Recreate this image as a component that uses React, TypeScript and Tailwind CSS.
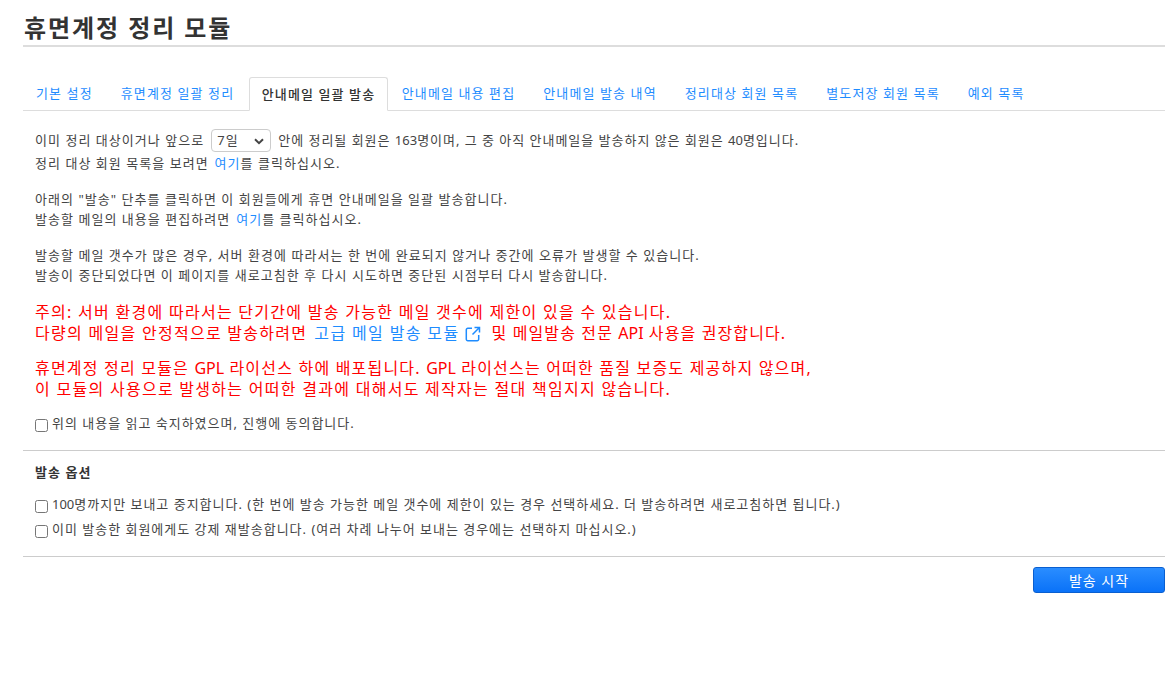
const font = { fontFamily: '"Noto Sans", "Noto Sans CJK KR", sans-serif' };

const tabs = ["기본 설정", "휴면계정 일괄 정리", "안내메일 일괄 발송", "안내메일 내용 편집", "안내메일 발송 내역", "정리대상 회원 목록", "별도저장 회원 목록", "예외 목록"];

function Latin({ children }: { children: string }) {
  return <span className="tracking-normal">{children}</span>;
}

function Check({ children }: { children: React.ReactNode }) {
  return (
    <label className="flex items-center h-[25px]">
      <span className="w-[13px] h-[13px] ml-[12px] mr-[3px] mt-[3px] border border-[#767676] rounded-[2.5px] bg-white shrink-0 box-border" />
      <span className="ml-px tracking-[0.076em]">{children}</span>
    </label>
  );
}

export default function App() {
  return (
    <div style={font} className="w-[1176px] h-[683px] bg-white pl-[23px] pr-[11px] text-[13px] tracking-[0.08em] text-[#444] overflow-hidden">
      <h1 className="h-[47px] pt-[11px] pl-px text-[24px] leading-[34px] font-bold text-[#333] border-b-2 border-[#ddd] tracking-[0.08em]">휴면계정 정리 모듈</h1>
      <div className="flex mt-[30px] h-[34px] border-b border-[#ddd] tracking-[0.085em]">
        {tabs.map((t, i) => (
          <div key={t} className={i === 2
            ? "h-[34px] ml-px px-[11.500px] leading-[33px] font-medium text-[#333] bg-white border border-[#ddd] border-b-white rounded-t-[3px] whitespace-nowrap"
            : i === 0
              ? "h-[33px] pl-[13px] pr-[14px] leading-[33px] text-[#1e8cff] whitespace-nowrap"
              : "h-[33px] px-[14px] leading-[33px] text-[#1e8cff] whitespace-nowrap"}>{t}</div>
        ))}
      </div>
      <div className="pl-[12px] pt-[18px] leading-[23px]">
        <p className="flex items-center h-[23px] whitespace-pre">
          <span>이미 정리 대상이거나 앞으로</span>
          <span className="relative inline-flex items-center w-[60px] h-[23px] ml-[7px] mr-[7px] border border-[#ccc] rounded-[4px] pl-[5px] text-[13px] text-[#444]">
            7일
            <svg className="absolute right-[6px] top-[8px]" width="10" height="7" viewBox="0 0 10 7"><path d="M1 1.2 5 5.2 9 1.2" fill="none" stroke="#444" strokeWidth="2" /></svg>
          </span>
          <span className="tracking-[0.075em]">안에 정리될 회원은 <Latin>163</Latin>명이며, 그 중 아직 안내메일을 발송하지 않은 회원은 <Latin>40</Latin>명입니다.</span>
        </p>
        <p>정리 대상 회원 목록을 보려면 <span className="ml-[1.5px] text-[#1e8cff]">여기</span>를 클릭하십시오.</p>
        <p className="mt-[13px]">아래의 "발송" 단추를 클릭하면 이 회원들에게 휴면 안내메일을 일괄 발송합니다.</p>
        <p className="-mt-[3px]">발송할 메일의 내용을 편집하려면 <span className="ml-[1.5px] text-[#1e8cff]">여기</span>를 클릭하십시오.</p>
        <p className="mt-[13px]">발송할 메일 갯수가 많은 경우, 서버 환경에 따라서는 한 번에 완료되지 않거나 중간에 오류가 발생할 수 있습니다.</p>
        <p className="-mt-[3px]">발송이 중단되었다면 이 페이지를 새로고침한 후 다시 시도하면 중단된 시점부터 다시 발송합니다.</p>
        <div className="mt-[15px] text-[16px] leading-[21px] text-[#f00] tracking-[0.08em]">
          <p>주의: 서버 환경에 따라서는 단기간에 발송 가능한 메일 갯수에 제한이 있을 수 있습니다.</p>
          <p className="flex items-center whitespace-pre">
            <span>다량의 메일을 안정적으로 발송하려면</span>
            <span className="ml-[7px] text-[#1e8cff] tracking-[0.085em]">고급 메일 발송 모듈</span>
            <svg className="ml-[5px] mr-[11px]" width="16" height="16" viewBox="0 0 16 16" fill="none" stroke="#1e8cff" strokeWidth="1.5"><path d="M7 2.300H2.800a1.500 1.500 0 0 0-1.500 1.500v9.400a1.500 1.500 0 0 0 1.500 1.500h9.400a1.500 1.500 0 0 0 1.500-1.500V9" /><path d="M9.500 1.500h5v5M14.200 1.800 7.500 8.500" /></svg>
            <span className="tracking-[0.07em]">및 메일발송 전문 <Latin>API</Latin> 사용을 권장합니다.</span>
          </p>
          <p className="mt-[14px] tracking-[0.075em]">휴면계정 정리 모듈은 <Latin>GPL</Latin> 라이선스 하에 배포됩니다. <Latin>GPL</Latin> 라이선스는 어떠한 품질 보증도 제공하지 않으며,</p>
          <p>이 모듈의 사용으로 발생하는 어떠한 결과에 대해서도 제작자는 절대 책임지지 않습니다.</p>
        </div>
      </div>
      <div className="mt-[11px]"><Check>위의 내용을 읽고 숙지하였으며, 진행에 동의합니다.</Check></div>
      <div className="mt-[14px] border-t border-[#ccc] pt-[11px]">
        <div className="pl-[12px] h-[20px] leading-[20px] font-bold text-[#333]">발송 옵션</div>
        <div className="mt-[10px]">
          <Check><Latin>100</Latin>명까지만 보내고 중지합니다. (한 번에 발송 가능한 메일 갯수에 제한이 있는 경우 선택하세요. 더 발송하려면 새로고침하면 됩니다.)</Check>
          <Check>이미 발송한 회원에게도 강제 재발송합니다. (여러 차례 나누어 보내는 경우에는 선택하지 마십시오.)</Check>
        </div>
      </div>
      <div className="mt-[14px] border-t border-[#ccc] pt-[10px] flex justify-end">
        <button style={font} className="w-[132px] h-[26px] rounded-[3px] border border-[#0a5fd0] bg-[linear-gradient(#2a8dff,#0a72f8)] text-white text-[14px] tracking-[0.07em]">발송 시작</button>
      </div>
    </div>
  );
}
